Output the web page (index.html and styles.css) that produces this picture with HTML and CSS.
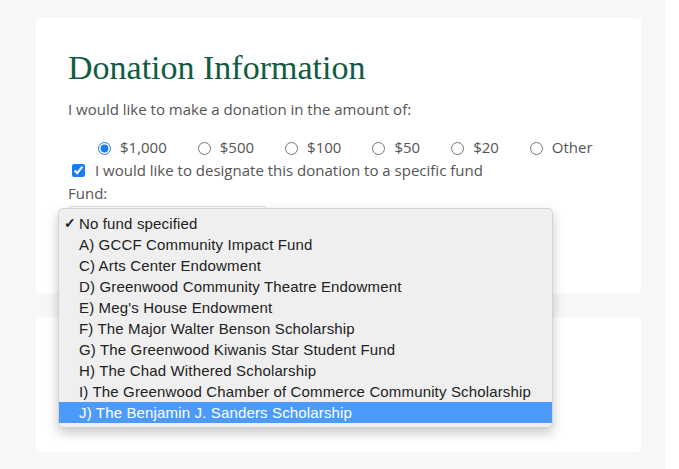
FILE: index.html
```html
<!DOCTYPE html>
<html lang="en">
<head>
    <meta charset="UTF-8">
    <meta name="viewport" content="width=device-width, initial-scale=1.0">
    <title>Donation Information</title>
    <link rel="stylesheet" href="styles.css">
</head>
<body>
    <div class="page">
        <section class="card card-info">
            <h1>Donation Information</h1>
            <p class="lead">I would like to make a donation in the amount of:</p>
            <div class="amounts">
                <label class="amount"><input type="radio" name="amount" checked> $1,000</label>
                <label class="amount"><input type="radio" name="amount"> $500</label>
                <label class="amount"><input type="radio" name="amount"> $100</label>
                <label class="amount"><input type="radio" name="amount"> $50</label>
                <label class="amount"><input type="radio" name="amount"> $20</label>
                <label class="amount"><input type="radio" name="amount"> Other</label>
            </div>
            <label class="designate"><input type="checkbox" checked> I would like to designate this donation to a specific fund</label>
            <label class="fund-label" for="fund">Fund:</label>
            <div class="fund-field">
                <div class="fund-select" id="fund"></div>
                <ul class="fund-menu">
                    <li class="selected">No fund specified</li>
                    <li>A) GCCF Community Impact Fund</li>
                    <li>C) Arts Center Endowment</li>
                    <li>D) Greenwood Community Theatre Endowment</li>
                    <li>E) Meg's House Endowment</li>
                    <li>F) The Major Walter Benson Scholarship</li>
                    <li>G) The Greenwood Kiwanis Star Student Fund</li>
                    <li>H) The Chad Withered Scholarship</li>
                    <li>I) The Greenwood Chamber of Commerce Community Scholarship</li>
                    <li class="hover">J) The Benjamin J. Sanders Scholarship</li>
                </ul>
            </div>
        </section>
        <section class="card card-next"></section>
    </div>
</body>
</html>
```

FILE: styles.css
```css
body {
    margin: 0;
    background: #fff;
    font-family: 'Open Sans', sans-serif;
    color: #555;
}
.page {
    width: 665px;
    box-sizing: border-box;
    min-height: 469px;
    background: #f7f7f7;
    padding: 18px 24px 16px 36px;
}
.card {
    background: #fff;
    border-radius: 4px;
}
.card-info {
    height: 275px;
    box-sizing: border-box;
    padding: 30px 32px 0 32px;
}
.card-next {
    margin-top: 24px;
    height: 135px;
}
h1 {
    font-family: 'Liberation Serif', serif;
    font-weight: normal;
    font-size: 34px;
    color: #0f5c45;
    margin: 0;
    line-height: 40px;
}
.lead {
    font-size: 15px;
    margin: 11px 0 0 0;
    line-height: 20px;
}
.amounts {
    display: flex;
    padding-left: 30px;
    margin-top: 18px;
    font-size: 15px;
    line-height: 20px;
}
.amount {
    display: flex;
    align-items: center;
    margin-right: 31px;
}
.amount input {
    margin: 3px 9px 0 0;
    accent-color: #1a7cf5;
}
.designate {
    display: flex;
    align-items: center;
    font-size: 15px;
    line-height: 20px;
    margin-top: 3px;
}
.designate input {
    margin: 1px 10px 0 4px;
    accent-color: #1a7cf5;
}
.fund-label {
    display: block;
    font-size: 15px;
    line-height: 20px;
    margin-top: 3px;
}
.fund-field {
    position: relative;
    margin-top: 3px;
}
.fund-select {
    width: 199px;
    height: 30px;
    box-sizing: border-box;
    border: 1px solid #ddd;
    border-radius: 4px;
    background: #fff;
}
.fund-menu {
    position: absolute;
    left: -10px;
    top: 2px;
    width: 495px;
    box-sizing: border-box;
    margin: 0;
    padding: 4px 0;
    list-style: none;
    background: #efefef;
    border: 1px solid #d3d3d3;
    border-radius: 5px;
    box-shadow: 0 5px 12px rgba(0, 0, 0, 0.22);
    font-family: 'Liberation Sans', sans-serif;
    font-size: 15px;
    letter-spacing: 0.15px;
    color: #222;
}
.fund-menu li {
    height: 21px;
    line-height: 21px;
    padding-left: 20px;
    position: relative;
}
.fund-menu li.selected::before {
    content: "\2713";
    position: absolute;
    left: 5px;
    font-size: 14px;
    font-weight: bold;
}
.fund-menu li.hover {
    background: #4c9bfa;
    color: #fff;
}
```
